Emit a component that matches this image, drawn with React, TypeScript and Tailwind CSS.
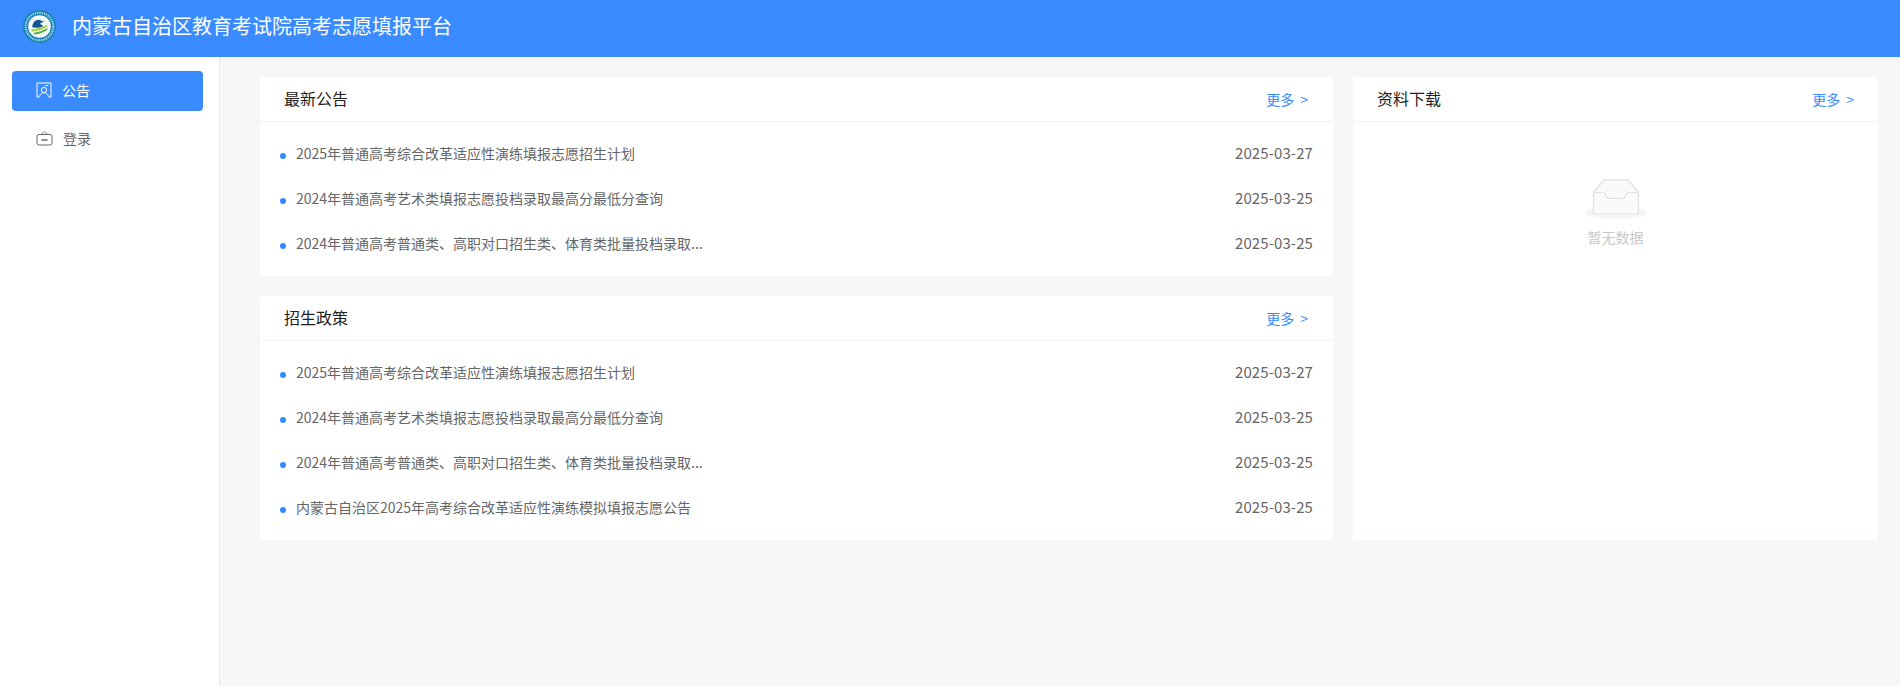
import { ReactNode } from "react";

const notices = [
  { title: "2025年普通高考综合改革适应性演练填报志愿招生计划", date: "2025-03-27" },
  { title: "2024年普通高考艺术类填报志愿投档录取最高分最低分查询", date: "2025-03-25" },
  { title: "2024年普通高考普通类、高职对口招生类、体育类批量投档录取...", date: "2025-03-25" },
];

const policies = [
  ...notices,
  { title: "内蒙古自治区2025年高考综合改革适应性演练模拟填报志愿公告", date: "2025-03-25" },
];

function Logo() {
  return (
    <svg width="33" height="33" viewBox="0 0 33 33" className="mb-[5px] shrink-0">
      <circle cx="16.500" cy="16.500" r="16.500" fill="#1c83b5" />
      <circle cx="16.500" cy="16.500" r="13.800" fill="none" stroke="#a9d8ea" strokeWidth="2" strokeDasharray="1.400 0.900" />
      <circle cx="16.500" cy="16.500" r="11.300" fill="#f4fafb" />
      <path d="M9.500 17.500c-.6-3.200 1.300-6.800 4.600-7.600 1.800-.4 3.400 0 4.600 1l2.800.6-3.200 1.300c-1.200.3-1.300 1.200-.3 1.800l2.600 1.500-4.800 1.700z" fill="#14568f" />
      <path d="M8 19.500c5-.4 10.500-2.400 15.500-4.300l1.200 1.300c-4.800 2.800-10.200 4.700-15.500 5.200z" fill="#a5d13f" />
      <path d="M10 23c5-.8 10-2.700 14.500-5.100l-.4 2c-3.900 2.400-8 4-11.900 4.700z" fill="#56ad3c" />
    </svg>
  );
}

function NoticeIcon() {
  return (
    <svg width="16" height="16" viewBox="0 0 16 16" fill="none" stroke="currentColor" strokeWidth="1" className="shrink-0">
      <path d="M3.500 15H1V1h14v14h-2.500" />
      <circle cx="8" cy="8" r="2.600" />
      <path d="M3.500 14.500c.6-2.600 2.400-3.900 4.500-3.900s3.900 1.300 4.500 3.900" />
      <path d="M9 3.500h3.500" />
    </svg>
  );
}

function LoginIcon() {
  return (
    <svg width="17" height="16" viewBox="0 0 17 16" fill="none" className="shrink-0">
      <path d="M5 4.500 8.500 1.500 12 4.500" stroke="#8a7a86" />
      <rect x="1" y="4.500" width="15" height="10.500" rx="2" stroke="#6f6470" />
      <path d="M5.500 10h6" stroke="#444" strokeWidth="1.200" />
    </svg>
  );
}

function EmptyBox() {
  return (
    <svg width="62" height="41" viewBox="0 0 62 41" fill="none">
      <ellipse cx="31" cy="34" rx="31" ry="6.500" fill="#f5f5f5" />
      <path d="M8.500 13.500 18.500 1.500a2 2 0 0 1 1.500-.7h22a2 2 0 0 1 1.500.7L53.500 13.500V33a2 2 0 0 1-2 2h-41a2 2 0 0 1-2-2z" fill="#fafafa" stroke="#e1e1e1" strokeWidth="1.200" />
      <path d="M8.500 13.500H18c1.500 0 2.300.7 2.600 2.200.4 2.300 1.400 3.600 3.400 3.600h13.500c2 0 3-1.300 3.400-3.600.3-1.500 1.100-2.200 2.600-2.200h9.900" fill="#fafafa" stroke="#e1e1e1" strokeWidth="1.200" />
    </svg>
  );
}

function Card({ title, className, children }: { title: string; className?: string; children: ReactNode }) {
  return (
    <section className={`rounded-[2px] bg-white ${className ?? ""}`}>
      <div className="flex h-[45px] items-center justify-between border-b border-[#f0f1f3] px-6">
        <h2 className="mb-[2px] text-[16px] font-normal text-[#222]">{title}</h2>
        <a className="flex gap-[6px] text-[14px] text-[#3a8bff]">
          更多
          <span>&gt;</span>
        </a>
      </div>
      {children}
    </section>
  );
}

function NewsList({ items }: { items: { title: string; date: string }[] }) {
  return (
    <ul className="px-5 pt-[10px] pb-[9px]">
      {items.map((item, i) => (
        <li key={i} className="flex h-[45px] items-center justify-between text-[14px] text-[#666]">
          <span className="flex items-center">
            <span className="mt-[2px] mr-[10px] h-[6px] w-[6px] rounded-full bg-[#2f8bff]" />
            <span className="mb-[2px]">{item.title}</span>
          </span>
          <span className="mb-[2px] text-[15px] tracking-[0.1px]">{item.date}</span>
        </li>
      ))}
    </ul>
  );
}

export default function App() {
  return (
    <div className="flex h-[686px] w-[1900px] flex-col overflow-hidden bg-[#f6f7f9] font-['Noto_Sans_CJK_SC',sans-serif]">
      <header className="flex h-[57px] shrink-0 items-center gap-4 bg-[#3a8bff] pl-[23px] text-[20px] text-white">
        <Logo />
        <span className="mb-[6px]">内蒙古自治区教育考试院高考志愿填报平台</span>
      </header>
      <div className="flex min-h-0 flex-1">
        <aside className="w-[220px] shrink-0 border-r border-[#e6e8eb] bg-white pl-3 pt-[14px] text-[14px]">
          <div className="flex h-10 w-[191px] items-center gap-[10px] rounded-[4px] bg-[#3a8bff] pb-[2px] pl-6 text-white">
            <NoticeIcon />
            公告
          </div>
          <div className="mt-2 flex h-10 items-center gap-[10px] pb-[2px] pl-6 text-[#666]">
            <LoginIcon />
            登录
          </div>
        </aside>
        <main className="grid flex-1 grid-cols-[1073px_525px] items-start gap-x-5 pl-10 pt-5">
          <div className="flex flex-col gap-5">
            <Card title="最新公告" className="[&_a]:mr-px">
              <NewsList items={notices} />
            </Card>
            <Card title="招生政策" className="[&_a]:mr-px">
              <NewsList items={policies} />
            </Card>
          </div>
          <Card title="资料下载" className="h-[463px]">
            <div className="flex flex-col items-center pt-[57px]">
              <EmptyBox />
              <p className="mt-[7px] text-[14px] text-[#c8c8c8]">暂无数据</p>
            </div>
          </Card>
        </main>
      </div>
    </div>
  );
}
